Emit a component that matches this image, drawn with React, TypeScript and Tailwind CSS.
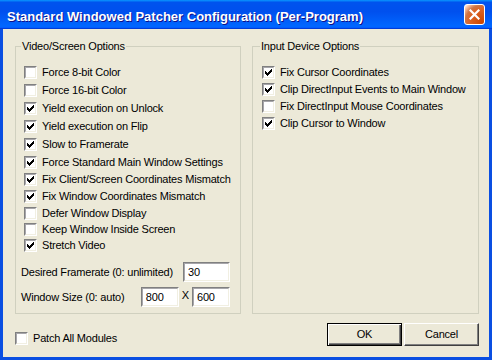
import type { ReactNode } from "react";

const videoOptions = [
  { label: "Force 8-bit Color", on: false, h: "h-[18px]" },
  { label: "Force 16-bit Color", on: false, h: "h-[18px]" },
  { label: "Yield execution on Unlock", on: true, h: "h-[18px]" },
  { label: "Yield execution on Flip", on: true, h: "h-[18px]" },
  { label: "Slow to Framerate", on: true, h: "h-[18px]" },
  { label: "Force Standard Main Window Settings", on: true, h: "h-[18px]" },
  { label: "Fix Client/Screen Coordinates Mismatch", on: true, h: "h-[17px]" },
  { label: "Fix Window Coordinates Mismatch", on: true, h: "h-[17px]" },
  { label: "Defer Window Display", on: false, h: "h-[16px]" },
  { label: "Keep Window Inside Screen", on: false, h: "h-[16px]" },
  { label: "Stretch Video", on: true, h: "h-[16px]" },
];

const inputOptions = [
  { label: "Fix Cursor Coordinates", on: true },
  { label: "Clip DirectInput Events to Main Window", on: true },
  { label: "Fix DirectInput Mouse Coordinates", on: false },
  { label: "Clip Cursor to Window", on: true },
];

// classic 7x7 tick, one 3px column per x
const tick = [2, 3, 4, 3, 2, 1, 0];

function CheckBox({ on }: { on?: boolean }) {
  return (
    <span className="flex size-[13px] shrink-0 border border-t-[#808080] border-l-[#808080] border-r-white border-b-white">
      <span className="flex flex-1 items-center justify-center border border-t-[#a7a6aa] border-l-[#a7a6aa] border-r-[#f1efe2] border-b-[#f1efe2] bg-white">
        {on && (
          <svg width="7" height="7" viewBox="0 0 7 7" shapeRendering="crispEdges">
            {tick.map((y, x) => (
              <rect key={x} x={x} y={y} width="1" height="3" fill="#000" />
            ))}
          </svg>
        )}
      </span>
    </span>
  );
}

function Option({ label, on, className = "" }: { label: string; on?: boolean; className?: string }) {
  return (
    <label className={`flex items-center gap-[5px] whitespace-nowrap ${className}`}>
      <CheckBox on={on} />
      <span>{label}</span>
    </label>
  );
}

function TextBox({ value, className = "" }: { value: string; className?: string }) {
  return (
    <div className={`flex h-[20px] items-center border border-t-[#808080] border-l-[#808080] border-r-white border-b-white ${className}`}>
      <div className="flex h-full flex-1 items-center border border-t-[#a7a6aa] border-l-[#a7a6aa] border-r-[#f1efe2] border-b-[#f1efe2] bg-white pl-[3px]">
        {value}
      </div>
    </div>
  );
}

function Group({ title, className, children }: { title: string; className: string; children: ReactNode }) {
  return (
    <fieldset className={`min-w-0 shrink-0 border border-[#d0d0bf] pl-[5px] pr-[10px] ${className}`}>
      <legend className="px-[1px] leading-[13px]">{title}</legend>
      {children}
    </fieldset>
  );
}

function Button({ label, primary }: { label: string; primary?: boolean }) {
  return (
    <button
      className={`h-[23px] w-[75px] bg-[#ece9d8] ${
        primary
          ? "border border-black shadow-[inset_1px_1px_0_#fff,inset_-1px_-1px_0_#404040,inset_-2px_-2px_0_#808080]"
          : "border border-t-white border-l-white border-r-[#404040] border-b-[#404040] shadow-[inset_-1px_-1px_0_#808080]"
      }`}
    >
      {label}
    </button>
  );
}

export default function App() {
  return (
    <div className="flex h-[360px] w-[492px] flex-col bg-[#0a4fe2] font-['Liberation_Sans',Arial,sans-serif] text-[11px] tracking-[-0.2px] text-black">
      <div className="flex h-[29px] shrink-0 items-center bg-[linear-gradient(180deg,#0997ff,#0053ee_8%,#0050ee_40%,#06f_88%,#06f_93%,#005bff_95%,#003dd7_96%,#003dd7)] pl-[7px] pr-[7px]">
        <span className="pt-[4px] text-[13px] font-bold tracking-normal text-white [text-shadow:1px_1px_0_#0f1089]">
          Standard Windowed Patcher Configuration (Per-Program)
        </span>
        <div className="ml-auto flex size-[21px] items-center justify-center rounded-[3px] border border-white bg-[radial-gradient(circle_at_90%_90%,#cc4600_0%,#dc6527_55%,#cd7546_70%,#ffccb2_90%,#fff_100%)]">
          <svg width="11" height="11" viewBox="0 0 11 11">
            <path d="M1.5 1.5l8 8M9.5 1.5l-8 8" stroke="#fff" strokeWidth="2.2" strokeLinecap="square" />
          </svg>
        </div>
      </div>

      <div className="mx-[3px] mb-[4px] flex flex-1 flex-col bg-[#ece9d8] pl-[12px] pr-[10px] pt-[11px]">
        <div className="flex gap-[11px]">
          <Group title="Video/Screen Options" className="w-[226px] pb-[6px]">
            <div className="flex flex-col pl-[3px] pt-[10px]">
              {videoOptions.map((o) => (
                <Option key={o.label} label={o.label} on={o.on} className={o.h} />
              ))}
            </div>
            <div className="mt-[9px] flex h-[20px] items-center">
              <span>Desired Framerate (0: unlimited)</span>
              <TextBox value="30" className="ml-auto w-[47px]" />
            </div>
            <div className="mt-[5px] flex h-[20px] items-center">
              <span>Window Size (0: auto)</span>
              <TextBox value="800" className="ml-auto w-[38px]" />
              <span className="mx-[3px] -mt-[4px]">X</span>
              <TextBox value="600" className="w-[38px]" />
            </div>
          </Group>

          <Group title="Input Device Options" className="w-[227px] pl-[7px]">
            <div className="flex flex-col pl-[2px] pt-[11px]">
              {inputOptions.map((o) => (
                <Option key={o.label} label={o.label} on={o.on} className="h-[17px]" />
              ))}
            </div>
          </Group>
        </div>

        <div className="mt-[9px] flex items-start pb-[10px]">
          <Option label="Patch All Modules" className="mt-[7px]" />
          <div className="ml-auto flex gap-[2px]">
            <Button label="OK" primary />
            <Button label="Cancel" />
          </div>
        </div>
      </div>
    </div>
  );
}
